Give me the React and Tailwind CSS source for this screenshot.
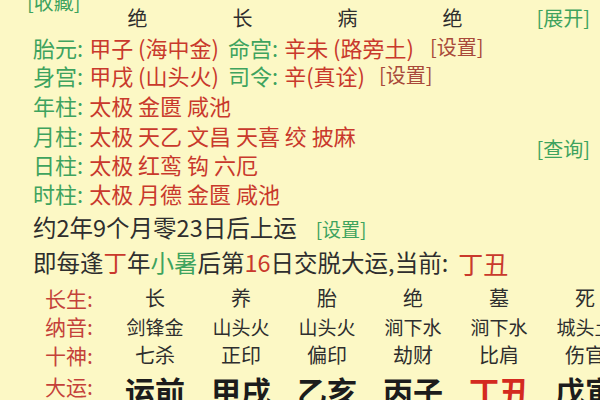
import React from 'react';

const green = 'text-[#3ea35e]';
const red = 'text-[#c9392c]';

const topStates = ['绝', '长', '病', '绝'];

const pillars = [
  { label: '年柱', stars: '太极 金匮 咸池' },
  { label: '月柱', stars: '太极 天乙 文昌 天喜 绞 披麻' },
  { label: '日柱', stars: '太极 红鸾 钩 六厄' },
  { label: '时柱', stars: '太极 月德 金匮 咸池' },
];

const table = [
  { label: '长生', cells: ['长', '养', '胎', '绝', '墓', '死'], size: 'text-[20px]', h: 'h-[28px]' },
  { label: '纳音', cells: ['剑锋金', '山头火', '山头火', '涧下水', '涧下水', '城头土'], size: 'text-[19px]', h: 'h-[29px]' },
  { label: '十神', cells: ['七杀', '正印', '偏印', '劫财', '比肩', '伤官'], size: 'text-[20px]', h: 'h-[28px]' },
];

const dayun = ['运前', '甲戌', '乙亥', '丙子', '丁丑', '戊寅'];

const PillarRow = ({ p }) => (
  <div className="flex h-[29px] items-center text-[22px] leading-none whitespace-nowrap">
    <span className={green}>{p.label}:</span>
    <span className={`${red} ml-[6px]`}>{p.stars}</span>
  </div>
);

export default function App() {
  return (
    <div
      className="w-[600px] h-[400px] overflow-hidden bg-[#fcf8c5] text-[#2e2e2e]"
      style={{ fontFamily: '"Noto Sans CJK SC", "Noto Sans", sans-serif' }}
    >
      {/* 收藏 */}
      <div className="flex h-[22px] -mt-[9px] items-center pl-[27px] text-[20px] leading-none">
        <span className={green}>[收藏]</span>
      </div>

      {/* 状态行 */}
      <div className="flex h-[30px] -mt-[10px] items-center pl-[85px] text-[20px] leading-none">
        {topStates.map((s, i) => (
          <span key={i} className="w-[105px] text-center">{s}</span>
        ))}
        <span className={`${green} ml-auto mr-[10px]`}>[展开]</span>
      </div>

      {/* 胎元 / 命宫 */}
      <div className="flex h-[28px] items-center pl-[33px] text-[22px] leading-none whitespace-nowrap">
        <div className="w-[195px] shrink-0 flex">
          <span className={green}>胎元:</span>
          <span className={`${red} ml-[6px]`}>甲子 (海中金)</span>
        </div>
        <span className={green}>命宫:</span>
        <span className={`${red} ml-[6px]`}>辛未 (路旁土)</span>
        <span className="text-[#a8493a] ml-[16px] text-[20px]">[设置]</span>
      </div>

      {/* 身宫 / 司令 */}
      <div className="flex h-[28px] items-center pl-[33px] text-[22px] leading-none whitespace-nowrap">
        <div className="w-[195px] shrink-0 flex">
          <span className={green}>身宫:</span>
          <span className={`${red} ml-[6px]`}>甲戌 (山头火)</span>
        </div>
        <span className={green}>司令:</span>
        <span className={`${red} ml-[6px]`}>辛(真诠)</span>
        <span className="text-[#a8493a] ml-[14px] text-[20px]">[设置]</span>
      </div>

      {/* 神煞 */}
      <div className="pl-[33px]">
        <div className="flex h-[31px] items-center text-[22px] leading-none">
          <span className={green}>{pillars[0].label}:</span>
          <span className={`${red} ml-[6px]`}>{pillars[0].stars}</span>
        </div>
        <div className="flex items-center">
          <div className="flex-1">
            <PillarRow p={pillars[1]} />
            <PillarRow p={pillars[2]} />
          </div>
          <span className={`${green} text-[20px] leading-none mr-[10px]`}>[查询]</span>
        </div>
        <PillarRow p={pillars[3]} />
      </div>

      {/* 上运 */}
      <div className="flex h-[42px] items-center pl-[33px] text-[23.5px] leading-none whitespace-nowrap">
        <span>约2年9个月零23日后上运</span>
        <span className={`${green} ml-[19px] text-[19px]`}>[设置]</span>
      </div>

      <div className="flex h-[28px] items-center pl-[33px] text-[23.5px] leading-none whitespace-nowrap">
        <span>即每逢</span>
        <span className={red}>丁</span>
        <span>年</span>
        <span className={green}>小暑</span>
        <span>后第</span>
        <span className={red}>16</span>
        <span>日交脱大运,当前:</span>
        <span className={`${red} ml-[10px] text-[25px]`}>丁丑</span>
      </div>

      {/* 大运表 */}
      <div className="mt-[7px]">
        {table.map((row, ri) => (
          <div key={ri} className={`flex items-center leading-none ${row.h}`}>
            <span className="w-[112px] shrink-0 pl-[45px] text-[21px] text-[#c4413a] whitespace-nowrap">{row.label}:</span>
            {row.cells.map((c, ci) => (
              <span key={ci} className={`w-[86px] shrink-0 text-center whitespace-nowrap ${row.size}`}>{c}</span>
            ))}
          </div>
        ))}
        <div className="flex h-[34px] items-center">
          <span className="w-[112px] shrink-0 pl-[45px] text-[21px] leading-none text-[#c4413a] whitespace-nowrap">大运:</span>
          {dayun.map((c, ci) => (
            <span
              key={ci}
              className={`w-[86px] shrink-0 text-center whitespace-nowrap text-[30px] font-bold leading-none mt-[8px] ${ci === 4 ? 'text-[#d42a1f]' : 'text-[#1c1c1c]'}`}
            >
              {c}
            </span>
          ))}
        </div>
      </div>
    </div>
  );
}
